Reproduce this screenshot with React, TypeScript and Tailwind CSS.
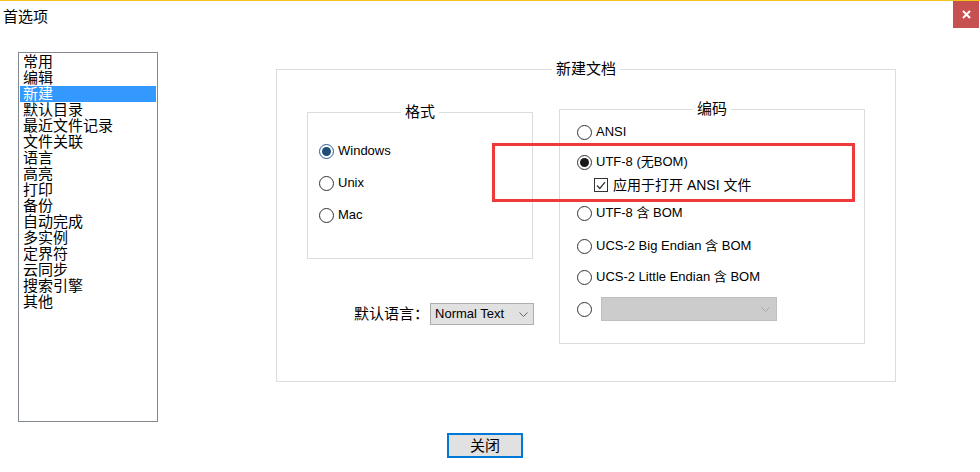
import React from "react"
import clsx from "clsx"

const categories = [
  "常用",
  "编辑",
  "新建",
  "默认目录",
  "最近文件记录",
  "文件关联",
  "语言",
  "高亮",
  "打印",
  "备份",
  "自动完成",
  "多实例",
  "定界符",
  "云同步",
  "搜索引擎",
  "其他",
]

function Radio({ checked, tone = "black" }: { checked?: boolean; tone?: "blue" | "black" }) {
  return (
    <span
      className={clsx(
        "flex h-[15px] w-[15px] shrink-0 items-center justify-center rounded-full border bg-white",
        tone === "blue" ? "border-[#2a5d8f]" : "border-[#333333]"
      )}
    >
      {checked && (
        <span
          className={clsx(
            "h-[9px] w-[9px] rounded-full",
            tone === "blue" ? "bg-[#1f4e79]" : "bg-[#1a1a1a]"
          )}
        />
      )}
    </span>
  )
}

function Checkbox({ checked }: { checked?: boolean }) {
  return (
    <span className="flex h-[14px] w-[14px] shrink-0 items-center justify-center border border-[#333333] bg-white">
      {checked && (
        <svg width="10" height="9" viewBox="0 0 10 9">
          <polyline points="1,4.5 3.8,7.5 9,1.2" fill="none" stroke="#333" strokeWidth="1.2" />
        </svg>
      )}
    </span>
  )
}

function Chevron({ color }: { color: string }) {
  return (
    <svg width="9" height="5" viewBox="0 0 9 5">
      <polyline points="0.5,0.5 4.5,4.5 8.5,0.5" fill="none" stroke={color} strokeWidth="1" />
    </svg>
  )
}

function Group({ label, className, children }: { label: string; className: string; children: React.ReactNode }) {
  return (
    <div className={clsx("relative border border-[#dcdcdc]", className)}>
      <span className="absolute left-1/2 top-[-9px] -translate-x-1/2 bg-white px-[4px] text-[15px] leading-[16px]">
        {label}
      </span>
      {children}
    </div>
  )
}

function Option({ label, checked, tone }: { label: React.ReactNode; checked?: boolean; tone?: "blue" | "black" }) {
  return (
    <div className="flex h-[16px] items-center gap-[4px] text-[13px] leading-[16px]">
      <Radio checked={checked} tone={tone} />
      <span className="whitespace-nowrap">{label}</span>
    </div>
  )
}

export default function App() {
  return (
    <div className="relative h-[472px] w-[980px] overflow-hidden border-t border-[#f0c419] bg-white font-['Liberation_Sans','Noto_Sans_CJK_SC',sans-serif] text-black">
      {/* Title bar */}
      <div className="flex h-[51px] items-start justify-between">
        <div className="pl-[3px] pt-[6px] text-[15px] leading-[20px]">首选项</div>
        <div className="mr-[1px] flex h-[27px] w-[26px] items-center justify-center bg-[#c75050]">
          <svg width="9" height="9" viewBox="0 0 9 9">
            <path d="M1 1 L8 8 M8 1 L1 8" stroke="white" strokeWidth="2" />
          </svg>
        </div>
      </div>

      {/* Body */}
      <div className="flex items-start">
        <div className="ml-[18px] h-[370px] w-[140px] border border-[#828790] p-[1px]">
          {categories.map((c) => (
            <div
              key={c}
              className={clsx(
                "h-[16px] pl-[3px] text-[15px] leading-[16px]",
                c === "新建" && "bg-[#3399ff] text-white"
              )}
            >
              {c}
            </div>
          ))}
        </div>

        <Group label="新建文档" className="ml-[118px] mt-[17px] h-[313px] w-[620px]">
          <div className="flex items-start pl-[30px]">
            <div className="flex w-[226px] flex-col">
              <Group label="格式" className="mt-[42px] h-[147px] w-[226px]">
                <div className="flex flex-col gap-[16px] pl-[11px] pt-[30px]">
                  <Option label="Windows" checked tone="blue" />
                  <Option label="Unix" />
                  <Option label="Mac" />
                </div>
              </Group>

              <div className="mt-[44px] flex items-center pl-[47px]">
                <span className="whitespace-nowrap text-[15px] leading-[22px]">默认语言：</span>
                <div className="ml-[1px] flex h-[22px] w-[104px] shrink-0 items-center justify-between border border-[#adadad] bg-[#e1e1e1] pl-[4px] pr-[5px] text-[13px]">
                  <span>Normal Text</span>
                  <Chevron color="#666" />
                </div>
              </div>
            </div>

            <Group label="编码" className="ml-[26px] mt-[39px] h-[235px] w-[306px]">
              <div className="flex flex-col pl-[17px] pt-[14px]">
                <Option label="ANSI" />
                <div className="mt-[14px]">
                  <Option label="UTF-8 (无BOM)" checked />
                </div>
                <div className="mt-[7px] flex h-[16px] items-center gap-[5px] pl-[17px] text-[14px] leading-[16px]">
                  <Checkbox checked />
                  <span className="whitespace-nowrap">应用于打开 ANSI 文件</span>
                </div>
                <div className="mt-[12px]">
                  <Option label="UTF-8 含 BOM" />
                </div>
                <div className="mt-[17px]">
                  <Option label="UCS-2 Big Endian 含 BOM" />
                </div>
                <div className="mt-[15px]">
                  <Option label="UCS-2 Little Endian 含 BOM" />
                </div>
                <div className="mt-[12px] flex h-[24px] items-center gap-[9px]">
                  <Radio />
                  <div className="flex h-[24px] w-[176px] items-center justify-end border border-[#bfbfbf] bg-[#cccccc] pr-[6px]">
                    <Chevron color="#a8a8a8" />
                  </div>
                </div>
              </div>
            </Group>
          </div>
        </Group>
      </div>

      {/* Footer */}
      <div className="ml-[447px] mt-[11px] flex h-[25px] w-[76px] items-center justify-center border-2 border-[#0078d7] bg-[#e1e1e1] text-[15px] leading-[16px]">
        关闭
      </div>

      {/* Annotation overlay */}
      <div className="absolute left-[492px] top-[142px] h-[59px] w-[363px] border-[3px] border-[#ee3a3a]" />
    </div>
  )
}
